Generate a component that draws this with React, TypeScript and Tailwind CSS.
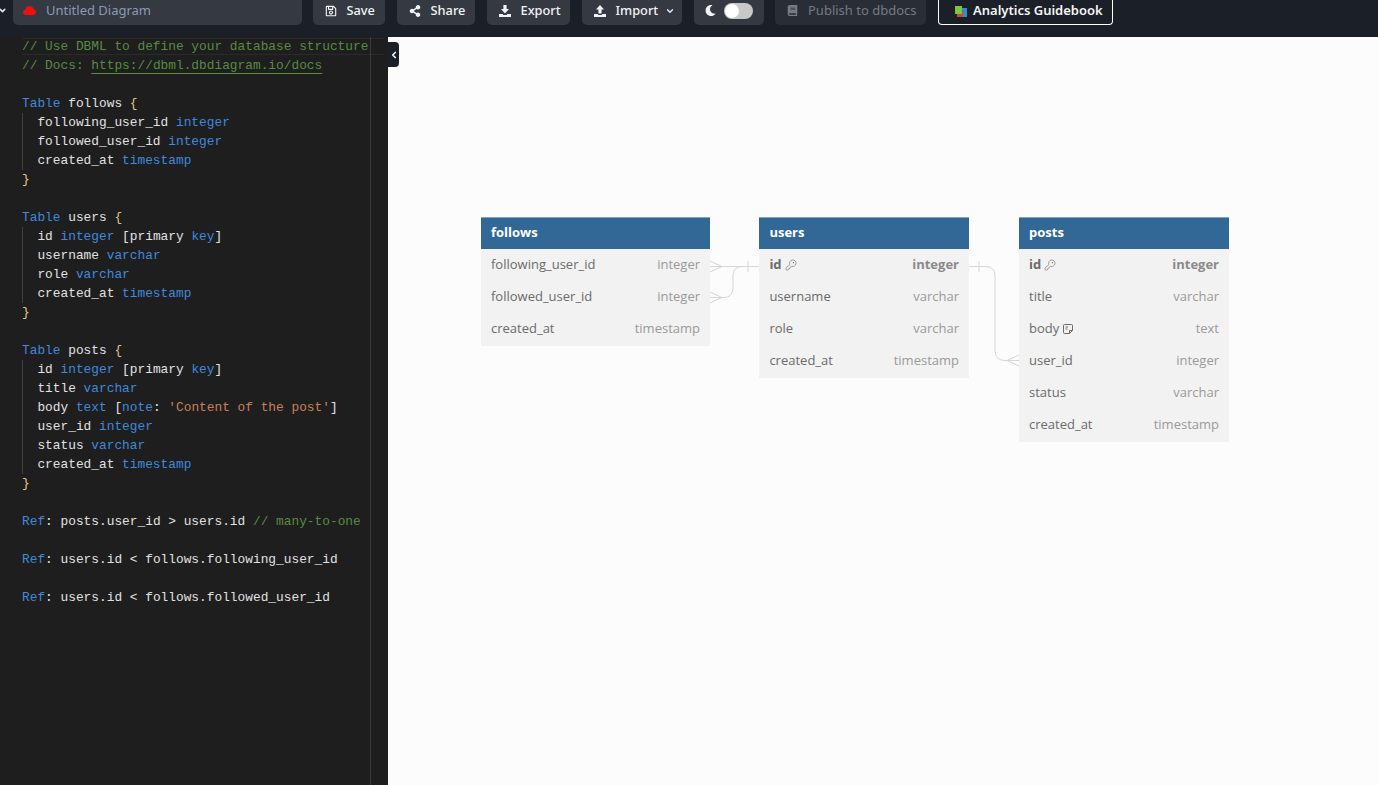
import { ChevronDown, ChevronLeft, KeyRound } from "lucide-react";
import { FaBook, FaMoon, FaRegSave, FaShareAlt } from "react-icons/fa";

type Tok = [string, string?];

const green = "text-[#568c42]";
const blue = "text-[#4089dc]";
const brace = "text-[#e3c48c]";
const str = "text-[#c9805c]";

// one entry per editor line, empty array = blank line
const code: Tok[][] = [
  [["// Use DBML to define your database structure", green]],
  [["// Docs: ", green], ["https://dbml.dbdiagram.io/docs", green + " underline underline-offset-4"]],
  [],
  [["Table", blue], [" follows "], ["{", brace]],
  [["  following_user_id "], ["integer", blue]],
  [["  followed_user_id "], ["integer", blue]],
  [["  created_at "], ["timestamp", blue]],
  [["}", brace]],
  [],
  [["Table", blue], [" users "], ["{", brace]],
  [["  id "], ["integer", blue], [" [primary "], ["key", blue], ["]"]],
  [["  username "], ["varchar", blue]],
  [["  role "], ["varchar", blue]],
  [["  created_at "], ["timestamp", blue]],
  [["}", brace]],
  [],
  [["Table", blue], [" posts "], ["{", brace]],
  [["  id "], ["integer", blue], [" [primary "], ["key", blue], ["]"]],
  [["  title "], ["varchar", blue]],
  [["  body "], ["text", blue], [" ["], ["note", blue], [": "], ["'Content of the post'", str], ["]"]],
  [["  user_id "], ["integer", blue]],
  [["  status "], ["varchar", blue]],
  [["  created_at "], ["timestamp", blue]],
  [["}", brace]],
  [],
  [["Ref", blue], [": posts.user_id > users.id "], ["// many-to-one", green]],
  [],
  [["Ref", blue], [": users.id < follows.following_user_id"]],
  [],
  [["Ref", blue], [": users.id < follows.followed_user_id"]],
];

const guides = [
  { top: 113, height: 57 },
  { top: 227, height: 76 },
  { top: 360, height: 114 },
];

type Field = { name: string; type: string; pk?: boolean; note?: boolean };

const tables: { name: string; left: number; width: number; fields: Field[] }[] = [
  {
    name: "follows",
    left: 93,
    width: 229,
    fields: [
      { name: "following_user_id", type: "integer" },
      { name: "followed_user_id", type: "integer" },
      { name: "created_at", type: "timestamp" },
    ],
  },
  {
    name: "users",
    left: 371.4,
    width: 209.6,
    fields: [
      { name: "id", type: "integer", pk: true },
      { name: "username", type: "varchar" },
      { name: "role", type: "varchar" },
      { name: "created_at", type: "timestamp" },
    ],
  },
  {
    name: "posts",
    left: 631,
    width: 210,
    fields: [
      { name: "id", type: "integer", pk: true },
      { name: "title", type: "varchar" },
      { name: "body", type: "text", note: true },
      { name: "user_id", type: "integer" },
      { name: "status", type: "varchar" },
      { name: "created_at", type: "timestamp" },
    ],
  },
];

function TrayIcon({ up }: { up?: boolean }) {
  return (
    <svg width="14" height="14" viewBox="0 0 14 14" fill="currentColor">
      <path d={up ? "M7 1 L11 5.5 H8.6 V9.5 H5.4 V5.5 H3 Z" : "M5.4 1 H8.6 V5 H11 L7 9.5 L3 5 H5.4 Z"} />
      <path d="M1 10 H4.5 L5.5 11 H8.5 L9.5 10 H13 V13 H1 Z" />
    </svg>
  );
}

function NoteIcon() {
  return (
    <svg width="12" height="12" viewBox="0 0 12 12" fill="none" stroke="currentColor" strokeWidth="1">
      <path d="M2.5 1.5 H9.5 Q10.5 1.5 10.5 2.5 V7.5 L7.5 10.5 H2.5 Q1.5 10.5 1.5 9.5 V2.5 Q1.5 1.5 2.5 1.5 Z" />
      <path d="M7.5 10.5 V7.5 H10.5 M3.5 4 H6 M3.5 6 H5.5" />
    </svg>
  );
}

function TopButton({ icon, label, width, extra }: { icon: React.ReactNode; label: string; width: string; extra?: React.ReactNode }) {
  return (
    <button className={"flex h-[25px] items-center rounded-b-[5px] bg-[#353942] pb-[4px] pl-[11px] text-[12.8px] font-medium text-[#f2f3f5] " + width}>
      <span className="mr-[8.5px] flex w-[14px] justify-center">{icon}</span>
      {label}
      {extra}
    </button>
  );
}

function TopBar() {
  return (
    <header className="flex h-[37px] shrink-0 items-start bg-[#1b1f28]">
      <ChevronDown size={9} strokeWidth={4} className="mt-[6px] -ml-[2px] w-[9px] text-[#e8e8e8]" />
      <div className="ml-[6px] flex h-[25px] w-[289px] items-center rounded-b-[5px] bg-[#353942] pb-[4px] pl-[10px] text-[13px] text-[#8b9bb4]">
        <svg width="13" height="9" viewBox="0 0 13 9" fill="#f00f0f" className="mr-[10px]">
          <path d="M3 9 C1 9 0 7.8 0 6.3 C0 5 1 4 2.2 3.9 C2.6 1.6 4.4 0 6.6 0 C8.7 0 10.2 1.3 10.7 3.3 C12 3.5 13 4.6 13 6 C13 7.7 11.8 9 10.2 9 Z" />
        </svg>
        Untitled Diagram
      </div>
      <div className="ml-[11px] flex gap-[12px]">
        <TopButton icon={<FaRegSave size={12} />} label="Save" width="w-[72px]" />
        <TopButton icon={<FaShareAlt size={12} />} label="Share" width="w-[78px]" />
        <TopButton icon={<TrayIcon />} label="Export" width="w-[83px]" />
        <TopButton
          icon={<TrayIcon up />}
          label="Import"
          width="w-[100px]"
          extra={<ChevronDown size={10} strokeWidth={3} className="ml-[7px]" />}
        />
      </div>
      <div className="ml-[12px] flex h-[25px] w-[70px] items-center rounded-b-[5px] bg-[#353942] pb-[4px] pl-[11px] text-[#f2f3f5]">
        <FaMoon size={11} />
        <div className="ml-[8px] flex h-[16px] w-[29px] items-center rounded-full bg-[#c8c8c8] pl-[1px]">
          <div className="h-[14px] w-[14px] rounded-full bg-white" />
        </div>
      </div>
      <div className="ml-[11px] flex h-[25px] w-[151px] items-center rounded-b-[5px] bg-[#292d35] pb-[4px] pl-[12px] text-[13px] text-[#757a83]">
        <FaBook size={11} className="mr-[10px]" />
        Publish to dbdocs
      </div>
      <div className="ml-[12px] flex h-[25px] w-[175px] items-center rounded-b-[4px] border border-t-0 border-white pb-[2px] pl-[15px] text-[13px] font-semibold text-[#f5f5f5]">
        <svg width="14" height="13" viewBox="0 0 14 13" className="mr-[5px] shrink-0">
          <rect x="5" y="3" width="8" height="9" fill="#2c8fd6" />
          <rect x="3" y="5" width="6" height="7" fill="#d8403a" />
          <rect x="1" y="1" width="7" height="8" fill="#7cc63f" />
        </svg>
        Analytics Guidebook
      </div>
    </header>
  );
}

function Editor() {
  return (
    <aside className="relative h-full w-[388px] shrink-0 bg-[#1e1e1e] pl-[22px] font-['Liberation_Mono',monospace] text-[12.83px] leading-[20px] text-[#e2e2e2]">
      <div className="absolute left-[22px] top-[1px] h-[17px] w-[362px] border-y border-[#2a2a2a]" />
      <div className="absolute bottom-0 left-[370px] top-0 w-px bg-[#3a3a3a]" />
      {guides.map((g) => (
        <div key={g.top} className="absolute left-[22px] w-px bg-[#404040]" style={{ top: g.top - 37, height: g.height }} />
      ))}
      {code.map((line, i) => (
        <div key={i} className="relative h-[19px] whitespace-pre">
          {line.map(([text, cls], j) => (
            <span key={j} className={cls}>
              {text}
            </span>
          ))}
        </div>
      ))}
      <button className="absolute left-[388px] top-[5px] z-10 flex h-[25px] w-[11px] items-center justify-center rounded-r-[4px] bg-[#1b1f28] text-white">
        <ChevronLeft size={10} strokeWidth={4} />
      </button>
    </aside>
  );
}

function TableCard({ t }: { t: (typeof tables)[number] }) {
  return (
    <div className="absolute top-[180px] bg-[#f2f2f2] pb-px font-['Open_Sans',sans-serif] text-[13px]" style={{ left: t.left, width: t.width }}>
      <div className="flex h-[32px] items-center border-t border-[#7fa3c4] bg-[#316896] px-[10px] pb-[2px] font-bold text-white">
        {t.name}
      </div>
      {t.fields.map((f) => (
        <div key={f.name} className="flex h-[32px] items-center justify-between px-[10px] text-[#6b6b6b]">
          <span className={"flex items-center gap-[3px] " + (f.pk ? "font-bold" : "")}>
            {f.name}
            {f.pk && <KeyRound size={12} strokeWidth={1.25} />}
            {f.note && <NoteIcon />}
          </span>
          <span className={f.pk ? "font-bold text-[#8a8a8a]" : "text-[#9a9a9a]"}>{f.type}</span>
        </div>
      ))}
    </div>
  );
}

function Diagram() {
  return (
    <main className="relative h-full flex-1 overflow-hidden bg-[#fcfcfc]">
      {tables.map((t) => (
        <TableCard key={t.name} t={t} />
      ))}
      {/* relationship lines, coords relative to the canvas */}
      <svg className="absolute left-0 top-0" width="990" height="748" fill="none" stroke="#d6d6d6" strokeWidth="1">
        <path d="M322 229.5 H371" />
        <path d="M322 260.5 H336 Q344 260.5 345 252 V238 Q346 229.5 354 229.5 H371" />
        <path d="M322 224 L334 229.5 L322 235 M322 255 L334 260.5 L322 266" />
        <path d="M360 224 V235" />
        <path d="M581 229.5 H597 Q607 229.5 607 239 V313 Q607 323.5 617 323.5 H631" />
        <path d="M591 224 V235" />
        <path d="M631 318 L619 323.5 L631 329" />
      </svg>
    </main>
  );
}

export default function App() {
  return (
    <div className="flex h-screen flex-col overflow-hidden font-['Noto_Sans',sans-serif]">
      <TopBar />
      <div className="flex min-h-0 flex-1">
        <Editor />
        <Diagram />
      </div>
    </div>
  );
}
